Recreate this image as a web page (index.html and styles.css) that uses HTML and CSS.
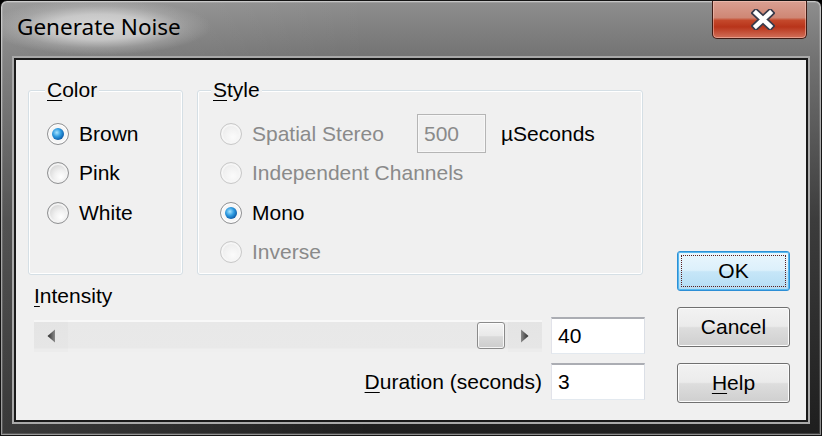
FILE: index.html
```html
<!DOCTYPE html>
<html lang="en">
<head>
<meta charset="utf-8">
<title>Generate Noise</title>
<link rel="stylesheet" href="styles.css">
</head>
<body>
<div class="window">
  <div class="titlebar">
    <div class="title">Generate Noise</div>
    <div class="close">
      <svg width="24" height="21" viewBox="0 0 24 21">
        <path d="M5 4 L19 17 M19 4 L5 17" stroke="#3a3c4c" stroke-width="8" stroke-linecap="square" fill="none"/>
        <path d="M5 4 L19 17 M19 4 L5 17" stroke="#ffffff" stroke-width="4.5" stroke-linecap="square" fill="none"/>
      </svg>
    </div>
  </div>
  <div class="body">
    <div class="frame">
      <div class="client">
        <div class="main">
          <div class="groups">
            <div class="group group-color">
              <div class="legend"><u>C</u>olor</div>
              <div class="rows">
                <div class="radio-row"><span class="radio checked"></span><span>Brown</span></div>
                <div class="radio-row"><span class="radio"></span><span>Pink</span></div>
                <div class="radio-row"><span class="radio"></span><span>White</span></div>
              </div>
            </div>
            <div class="group group-style">
              <div class="legend"><u>S</u>tyle</div>
              <div class="rows">
                <div class="radio-row disabled">
                  <span class="radio"></span><span class="spatial-label">Spatial Stereo</span>
                  <span class="textbox textbox-disabled">500</span>
                  <span class="unit">µSeconds</span>
                </div>
                <div class="radio-row disabled"><span class="radio"></span><span>Independent Channels</span></div>
                <div class="radio-row"><span class="radio checked"></span><span>Mono</span></div>
                <div class="radio-row disabled"><span class="radio"></span><span>Inverse</span></div>
              </div>
            </div>
          </div>
          <div class="lower">
            <div class="intensity-label"><u>I</u>ntensity</div>
            <div class="field-row">
              <div class="scrollbar">
                <div class="sb-btn">
                  <svg width="8" height="14" viewBox="0 0 8 14"><defs><linearGradient id="al" x1="0" x2="1" y1="0" y2="0"><stop offset="0" stop-color="#2e2e2e"/><stop offset="1" stop-color="#8a8a8a"/></linearGradient></defs><polygon points="8,0.5 0.5,7 8,13.5" fill="url(#al)"/></svg>
                </div>
                <div class="sb-track">
                  <div class="sb-thumb" style="margin-left: 409px"></div>
                </div>
                <div class="sb-btn">
                  <svg width="8" height="14" viewBox="0 0 8 14"><defs><linearGradient id="ar" x1="0" x2="1" y1="0" y2="0"><stop offset="0" stop-color="#8a8a8a"/><stop offset="1" stop-color="#2e2e2e"/></linearGradient></defs><polygon points="0,0.5 7.5,7 0,13.5" fill="url(#ar)"/></svg>
                </div>
              </div>
              <div class="textbox">40</div>
            </div>
            <div class="field-row field-row-end">
              <div class="field-label"><u>D</u>uration (seconds)</div>
              <div class="textbox">3</div>
            </div>
          </div>
        </div>
        <div class="buttons">
          <div class="button button-default"><div class="focus">OK</div></div>
          <div class="button"><div class="focus-none">Cancel</div></div>
          <div class="button"><div class="focus-none"><u>H</u>elp</div></div>
        </div>
      </div>
    </div>
  </div>
</div>
</body>
</html>
```
FILE: styles.css
```css
* { box-sizing: border-box; }
html, body { margin: 0; padding: 0; }
body {
  width: 822px;
  height: 436px;
  background: #000;
  font-family: "Liberation Sans", Arial, sans-serif;
  font-size: 21px;
  color: #000;
}
u { text-decoration-thickness: 1px; text-underline-offset: 3px; }

.window {
  width: 822px;
  height: 436px;
  display: flex;
  flex-direction: column;
  border: 1px solid #141414;
  border-radius: 7px 7px 0 0;
  overflow: hidden;
  background:
    linear-gradient(to right, rgba(255,255,255,0.12), rgba(255,255,255,0) 45%),
    linear-gradient(to bottom, #8e8e8e 0, #727272 58px, #3c3c3c 220px, #1e1e1e 100%);
  box-shadow: inset 0 0 0 1px rgba(255,255,255,0.4), inset 0 0 0 2px rgba(255,255,255,0.15);
}

.titlebar {
  height: 55px;
  flex: none;
  display: flex;
  align-items: flex-start;
  padding-top: 4px;
}
.title {
  margin-left: -14px;
  margin-top: -6px;
  padding: 14px 30px;
  font-family: "Noto Sans", "Open Sans", sans-serif;
  font-size: 22.5px;
  line-height: 28px;
  color: #000;
  background: radial-gradient(closest-side, rgba(222,222,222,0.92) 0%, rgba(218,218,218,0.75) 45%, rgba(200,200,200,0.3) 75%, rgba(200,200,200,0) 100%);
}
.close {
  margin-left: auto;
  margin-right: 14px;
  margin-top: -4px;
  width: 95px;
  height: 38px;
  padding-left: 7px;
  display: flex;
  align-items: center;
  justify-content: center;
  border: 1px solid #3f1b14;
  border-top: none;
  border-radius: 0 0 5px 5px;
  background: linear-gradient(#d9a092 0%, #cf8775 45%, #c4492c 52%, #b8341a 70%, #d2705a 100%);
  box-shadow: inset 0 0 0 1px rgba(255,215,205,0.45);
}

.body {
  flex: 1;
  display: flex;
  padding: 0 11px 11px 11px;
}
.frame {
  flex: 1;
  display: flex;
  border: 2px solid #a9a9a9;
}
.client {
  flex: 1;
  display: flex;
  border: 2px solid #1a1a1a;
  background: #f0f0f0;
  padding: 30px 16px 17px 12px;
}

.main { width: 617px; flex: none; }
.groups { display: flex; gap: 14px; }
.group {
  height: 185px;
  border: 1px solid #d5dfe5;
  border-radius: 3px;
  box-shadow: inset 0 0 0 1px #ffffff;
}
.group-color { width: 155px; }
.group-style { width: 446px; }
.legend {
  width: fit-content;
  margin-top: -13px;
  padding: 0 2px;
  line-height: 24px;
  background: #f0f0f0;
}
.group-color .legend { margin-left: 16px; }
.group-style .legend { margin-left: 13px; }

.rows { margin-top: 12px; }
.radio-row {
  height: 39.5px;
  display: flex;
  align-items: center;
  gap: 10px;
  line-height: 24px;
  white-space: nowrap;
}
.group-color .radio-row { padding-left: 18px; }
.group-style .radio-row { padding-left: 22px; }
.radio-row.disabled { color: #8a8a8a; }

.radio {
  width: 22px;
  height: 22px;
  flex: none;
  border-radius: 50%;
  border: 1px solid #8f9092;
  background: radial-gradient(circle at 64% 70%, #ffffff 0%, #f0f0f0 35%, #cdcdcd 85%);
  box-shadow: inset 0 0 0 2px #f3f3f3;
  display: flex;
  align-items: center;
  justify-content: center;
}
.radio.checked {
  background: #f6f6f6;
  box-shadow: inset 0 0 0 1px #ffffff;
}
.radio.checked::after {
  content: "";
  width: 12px;
  height: 12px;
  border-radius: 50%;
  background: radial-gradient(circle at 40% 38%, #a8e4ff 0%, #2d9ae0 40%, #0d5aa6 75%, #0a3f78 100%);
}
.disabled .radio {
  border-color: #c8c8c8;
  background: radial-gradient(circle at 60% 65%, #fbfbfb 0%, #f1f1f1 50%, #e3e3e3 100%);
  box-shadow: inset 0 0 0 2px #f6f6f6;
}

.spatial-label { width: 165px; margin-right: -10px; }
.textbox {
  width: 94px;
  height: 37px;
  flex: none;
  display: flex;
  align-items: center;
  padding-left: 6px;
  background: #ffffff;
  border: 1px solid;
  border-color: #abadb3 #dbdfe6 #e3e9ef #e2e3ea;
  border-top-width: 2px;
  line-height: 24px;
}
.textbox-disabled {
  width: 69px;
  height: 39px;
  background: #f0f0f0;
  border: 1px solid #b5b5b5;
  color: #8a8a8a;
  box-shadow: inset 0 0 0 1px #f7f7f7;
}
.unit { margin-left: 5px; color: #000; }

.lower { margin-left: 6px; }
.intensity-label { margin-top: 9px; line-height: 24px; }
.field-row {
  display: flex;
  align-items: center;
  gap: 9px;
  margin-top: 9px;
}
.field-row-end { justify-content: flex-end; }
.field-label { line-height: 24px; white-space: nowrap; }

.scrollbar {
  width: 508px;
  height: 32px;
  flex: none;
  display: flex;
  background: linear-gradient(#f8f8f8 0, #f8f8f8 2px, #e8e8e8 2px, #e9e9e9 28px, #efefef 29px, #efefef 100%);
}
.sb-btn {
  width: 34px;
  flex: none;
  display: flex;
  align-items: center;
  justify-content: center;
  background: linear-gradient(#f6f6f6 0, #f6f6f6 2px, #e4e4e4 2px, #e6e6e6 28px, #ececec 29px);
}
.sb-track {
  flex: 1;
  display: flex;
  align-items: center;
}
.sb-thumb {
  width: 28px;
  height: 27px;
  border: 1px solid #8b8b8b;
  border-radius: 3px;
  background: linear-gradient(#f4f4f4 0%, #e9e9e9 50%, #dadada 55%, #cdcdcd 100%);
  box-shadow: inset 0 0 0 1px rgba(255,255,255,0.8);
}

.buttons {
  margin-left: 32px;
  width: 113px;
  flex: none;
  display: flex;
  flex-direction: column;
  justify-content: flex-end;
  gap: 16px;
}
.button {
  height: 40px;
  padding: 3px;
  border: 1px solid #707070;
  border-radius: 3px;
  background: linear-gradient(#f2f2f2 0%, #ebebeb 48%, #dddddd 52%, #cfcfcf 100%);
  box-shadow: inset 0 0 0 1px #fcfcfc;
  display: flex;
}
.button-default {
  border-color: #2d8fd6;
  background: linear-gradient(#eaf6fd 0%, #dcf0fb 48%, #c6e6f8 52%, #b4dcf3 100%);
  box-shadow: inset 0 0 0 1px #57b8ee;
}
.focus, .focus-none {
  flex: 1;
  display: flex;
  align-items: center;
  justify-content: center;
  line-height: 24px;
  border: 1px dotted transparent;
}
.focus { border-color: #5a1e1e; }
```
